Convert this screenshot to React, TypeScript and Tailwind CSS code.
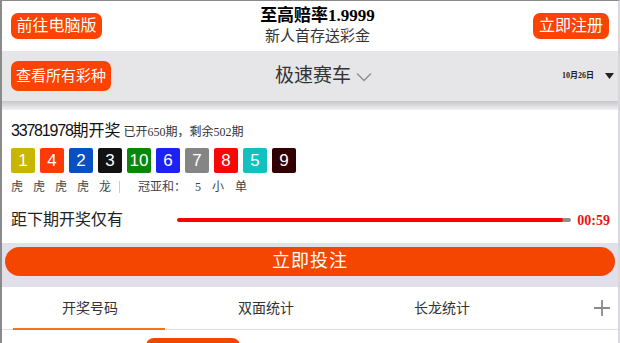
import React from "react";

const balls = [
  { n: 1, c: "bg-[#c8b600]" },
  { n: 4, c: "bg-[#fb3a06]" },
  { n: 2, c: "bg-[#0750c4]" },
  { n: 3, c: "bg-[#121212]" },
  { n: 10, c: "bg-[#0a860a]" },
  { n: 6, c: "bg-[#1b22f2]" },
  { n: 7, c: "bg-[#858585]" },
  { n: 8, c: "bg-[#fb0606]" },
  { n: 5, c: "bg-[#12c0c0]" },
  { n: 9, c: "bg-[#320000]" },
];

const tabs = ["开奖号码", "双面统计", "长龙统计"];

const App: React.FC = () => {
  return (
    <div className="w-[620px] h-[343px] overflow-hidden bg-white border-l-2 border-t border-r-2 border-l-[#8a8a8a] border-t-[#8a8a8a] border-r-[#d8d8dc] font-['Liberation_Sans','Noto_Sans_CJK_SC',sans-serif] text-[#222]">
      {/* top header */}
      <div className="h-[50px] flex items-center pl-[9px] pr-[9px]">
        <button className="h-[26px] w-[91px] rounded-[7px] bg-[#fc4300] text-white text-[16px] leading-[26px]">
          前往电脑版
        </button>
        <div className="flex-1 flex flex-col items-center">
          <div className="text-[17px] leading-[20px] font-bold text-black font-['Liberation_Serif','Noto_Sans_CJK_SC',serif]">
            至高赔率1.9999
          </div>
          <div className="text-[15px] leading-[20px] text-[#333]">新人首存送彩金</div>
        </div>
        <button className="h-[26px] w-[76px] rounded-[7px] bg-[#fc4300] text-white text-[16px] leading-[26px]">
          立即注册
        </button>
      </div>

      {/* lottery bar */}
      <div className="h-[50px] bg-[#e6e6e8] flex items-center pl-[9px]">
        <button className="h-[30px] w-[100px] rounded-[7px] bg-[#fc4300] text-white text-[15px] leading-[30px]">
          查看所有彩种
        </button>
        <div className="flex-1 flex items-center justify-center gap-[5px]">
          <span className="text-[19px] text-[#333]">极速赛车</span>
          <svg width="16" height="10" viewBox="0 0 16 10" className="mt-[2px]">
            <path d="M1 1.5 L8 8.5 L15 1.5" fill="none" stroke="#8c8c8c" strokeWidth="1.3" />
          </svg>
        </div>
        <div className="w-[82px] flex items-center justify-end gap-[11px] pr-[4px]">
          <span className="text-[8px] font-bold text-[#222] font-['Liberation_Serif','Noto_Sans_CJK_SC',serif]">10月26日</span>
          <svg width="9" height="6" viewBox="0 0 9 6">
            <path d="M0 0 L9 0 L4.5 6 Z" fill="#222" />
          </svg>
        </div>
      </div>
      <div className="h-[9px] bg-gradient-to-b from-[#c6c6cb] to-[#f2f2f5]" />

      {/* draw card */}
      <div className="pl-[9px] pr-[8px] pt-[10px] pb-[14px]">
        <div className="h-[22px] leading-[22px] flex items-baseline">
          <span className="text-[16px] text-[#111]">
            <span className="tracking-[-1.2px]">33781978</span>期开奖
          </span>
          <span className="ml-[3px] text-[12px] text-[#333] font-['Liberation_Serif','Noto_Sans_CJK_SC',serif]">
            已开650期，剩余502期
          </span>
        </div>
        <div className="mt-[6px] flex gap-[5px]">
          {balls.map((b) => (
            <div
              key={b.n}
              className={`${b.c} w-[24px] h-[25px] rounded-[2px] text-white text-[17px] leading-[25px] text-center`}
            >
              {b.n}
            </div>
          ))}
        </div>
        <div className="mt-[6px] h-[16px] flex items-center text-[12px] text-[#444]">
          <div className="flex gap-[10px]">
            <span>虎</span>
            <span>虎</span>
            <span>虎</span>
            <span>虎</span>
            <span>龙</span>
          </div>
          <span className="ml-[8px] w-px h-[12px] bg-[#ccc]" />
          <span className="ml-[18px]">冠亚和：</span>
          <span className="ml-[9px] font-['Liberation_Serif',serif]">5</span>
          <span className="ml-[11px]">小</span>
          <span className="ml-[11px]">单</span>
        </div>
        <div className="mt-[16px] h-[18px] flex items-center">
          <span className="w-[166px] text-[16px] text-[#222]">距下期开奖仅有</span>
          <div className="w-[395px] h-[4px] rounded-full bg-[#8e8e8e] overflow-hidden">
            <div className="h-full w-[98%] bg-[#ff0000] rounded-full" />
          </div>
          <span className="ml-[6px] text-[14px] font-bold text-[#ee1111] font-['Liberation_Serif',serif]">00:59</span>
        </div>
      </div>

      {/* bet button */}
      <div className="bg-[#e0dfea] pt-[4px] pb-[11px] px-[3px]">
        <button className="w-full h-[29px] rounded-full bg-[#f54600] text-white text-[18px] leading-[29px] tracking-[1px]">
          立即投注
        </button>
      </div>

      {/* tabs */}
      <div className="h-[43px] flex border-b border-[#e2dede]">
        {tabs.map((t, i) => (
          <div key={t} className="w-[176px] relative flex items-center justify-center text-[14px] text-[#333]">
            {t}
            {i === 0 && <div className="absolute bottom-[-1px] left-[11px] right-[13px] h-[2px] bg-[#f47320]" />}
          </div>
        ))}
        <div className="flex-1 flex items-center justify-end pr-[8px]">
          <svg width="16" height="16" viewBox="0 0 16 16">
            <path d="M8 0 V16 M0 8 H16" stroke="#8a8a8a" strokeWidth="1.8" />
          </svg>
        </div>
      </div>
      <div className="pt-[8px] pl-[144px]">
        <div className="w-[94px] h-[20px] rounded-t-[8px] bg-[#f54600]" />
      </div>
    </div>
  );
};

export default App;
